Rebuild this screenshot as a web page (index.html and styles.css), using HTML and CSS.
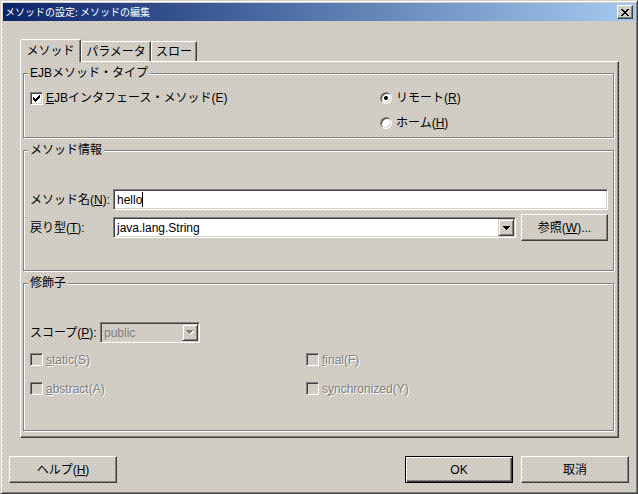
FILE: index.html
```html
<!DOCTYPE html>
<html lang="ja">
<head>
<meta charset="utf-8">
<title>メソッドの設定: メソッドの編集</title>
<link rel="stylesheet" href="styles.css">
</head>
<body>
<div class="window tex">
  <div class="titlebar">
    <span class="title">メソッドの設定: メソッドの編集</span>
    <span class="close tex"><svg width="8" height="7" viewBox="0 0 8 7" shape-rendering="crispEdges"><path fill="#000" d="M0 0h2v1h-2zM6 0h2v1h-2zM1 1h2v1h-2zM5 1h2v1h-2zM2 2h4v1h-4zM3 3h2v1h-2zM2 4h4v1h-4zM1 5h2v1h-2zM5 5h2v1h-2zM0 6h2v1h-2zM6 6h2v1h-2z"/></svg></span>
  </div>
  <div class="client">
    <div class="tabs">
      <div class="tab t1 active tex">メソッド</div>
      <div class="tab t2">パラメータ</div>
      <div class="tab t3">スロー</div>
    </div>
    <div class="panel">
      <div class="group g1">
        <div class="legend tex">EJBメソッド・タイプ</div>
        <div class="g1-body">
          <div class="g1-left">
            <div class="opt"><span class="cb"><svg width="7" height="7" viewBox="0 0 7 7" shape-rendering="crispEdges"><path fill="#000" d="M6 0h1v1h-1zM5 1h2v1h-2zM0 2h1v1h-1zM4 2h3v1h-3zM0 3h2v1h-2zM3 3h3v1h-3zM0 4h5v1h-5zM1 5h3v1h-3zM2 6h1v1h-1z"/></svg></span><span class="lbl"><u>E</u>JBインタフェース・メソッド(E)</span></div>
          </div>
          <div class="g1-right">
            <div class="opt"><span class="rb on"></span><span class="lbl">リモート(<u>R</u>)</span></div>
            <div class="opt"><span class="rb"></span><span class="lbl">ホーム(<u>H</u>)</span></div>
          </div>
        </div>
      </div>
      <div class="group g2">
        <div class="legend tex">メソッド情報</div>
        <div class="form-row r1">
          <span class="flabel">メソッド名(<u>N</u>):</span>
          <div class="field grow"><span>hello</span><span class="caret"></span></div>
        </div>
        <div class="form-row r2">
          <span class="flabel">戻り型(<u>T</u>):</span>
          <div class="field combo ctype"><span class="val">java.lang.String</span><span class="drop tex"><svg width="7" height="4" viewBox="0 0 7 4" shape-rendering="crispEdges"><path fill="#000" d="M0 0h7v1h-7zM1 1h5v1h-5zM2 2h3v1h-3zM3 3h1v1h-1z"/></svg></span></div>
          <button class="btn browse">参照(<u>W</u>)...</button>
        </div>
      </div>
      <div class="group g3">
        <div class="legend tex">修飾子</div>
        <div class="form-row scope">
          <span class="flabel short">スコープ(<u>P</u>):</span>
          <div class="field combo cscope disabled tex"><span class="val">public</span><span class="drop tex"><svg width="8" height="5" viewBox="0 0 8 5" shape-rendering="crispEdges"><path fill="#fff" d="M1 1h7v1h-7zM2 2h5v1h-5zM3 3h3v1h-3zM4 4h1v1h-1z"/><path fill="#808080" d="M0 0h7v1h-7zM1 1h5v1h-5zM2 2h3v1h-3zM3 3h1v1h-1z"/></svg></span></div>
        </div>
        <div class="checks">
          <div class="opt dis"><span class="cb tex"></span><span class="lbl"><u>s</u>tatic(S)</span></div>
          <div class="opt dis"><span class="cb tex"></span><span class="lbl"><u>f</u>inal(F)</span></div>
          <div class="opt dis"><span class="cb tex"></span><span class="lbl"><u>a</u>bstract(A)</span></div>
          <div class="opt dis"><span class="cb tex"></span><span class="lbl">s<u>y</u>nchronized(Y)</span></div>
        </div>
      </div>
    </div>
    <div class="buttons">
      <button class="btn">ヘルプ(<u>H</u>)</button>
      <button class="btn default">OK</button>
      <button class="btn">取消</button>
    </div>
  </div>
</div>
</body>
</html>
```

FILE: styles.css
```css
* { box-sizing: border-box; }
html, body { margin: 0; padding: 0; }
body {
  width: 638px;
  height: 494px;
  overflow: hidden;
  font-family: "Liberation Sans", "Noto Sans CJK JP", sans-serif;
  font-size: 12px;
  line-height: 14px;
  color: #000;
  background: #d4d0c8;
}
.tex {
  background-color: #d4d0c8;
  background-image:
    radial-gradient(circle at 1.5px 1.5px, #bab6ae 0.55px, rgba(186,182,174,0) 0.75px),
    radial-gradient(circle at 3.5px 3.5px, #bab6ae 0.55px, rgba(186,182,174,0) 0.75px);
  background-size: 4px 4px;
  background-attachment: fixed;
}
u { text-decoration-thickness: 1px; text-underline-offset: 1px; }

.window {
  width: 638px;
  height: 494px;
  border: 1px solid;
  border-color: #d4d0c8 #404040 #404040 #d4d0c8;
  box-shadow: inset 1px 1px #fff, inset -1px -1px #808080;
  padding: 2px;
  display: flex;
  flex-direction: column;
}

.titlebar {
  height: 18px;
  flex: none;
  display: flex;
  align-items: center;
  padding: 0 2px 0 2px;
  background: linear-gradient(90deg, #0a246a, #a6caf0);
  color: #fff;
}
.title {
  font-family: "Noto Sans CJK JP", sans-serif;
  font-size: 10px;
  line-height: 12px;
  white-space: nowrap;
}
.close {
  margin-left: auto;
  width: 16px;
  height: 14px;
  display: flex;
  align-items: center;
  justify-content: center;
  border: 1px solid;
  border-color: #fff #404040 #404040 #fff;
  box-shadow: inset -1px -1px #808080;
}

.client {
  flex: 1;
  display: flex;
  flex-direction: column;
  padding-top: 18px;
}

.tabs {
  display: flex;
  align-items: flex-end;
  height: 22px;
  margin-left: 17px;
  position: relative;
  z-index: 1;
}
.tab {
  height: 20px;
  border: 1px solid;
  border-bottom: 0;
  border-color: #fff #404040 #404040 #fff;
  box-shadow: inset -1px 0 #808080;
  border-radius: 2px 2px 0 0;
  display: flex;
  justify-content: center;
  padding-top: 3px;
  white-space: nowrap;
}
.tab.active {
  height: 23px;
  margin-bottom: -1px;
  padding-top: 4px;
}
.t1 { width: 61px; }
.t2 { width: 70px; }
.t3 { width: 46px; }

.panel {
  width: 599px;
  height: 377px;
  flex: none;
  margin-left: 17px;
  border: 1px solid;
  border-color: #fff #404040 #404040 #fff;
  box-shadow: inset -1px -1px #808080;
  padding: 11px 2px 0;
}

.group {
  width: 591px;
  border: 1px solid #808080;
  box-shadow: inset 1px 1px #fff, 1px 1px #fff;
  padding: 0 5px 0 6px;
}
.g1 { height: 65px; }
.g2 { height: 121px; margin-top: 12px; }
.g3 { height: 148px; margin-top: 12px; }

.legend {
  width: fit-content;
  height: 14px;
  margin: -8px 0 0 -2px;
  padding: 0 2px;
  white-space: nowrap;
}

.g1-body {
  display: flex;
  padding-top: 11px;
}
.g1-left { width: 350px; flex: none; }
.g1-right {
  display: flex;
  flex-direction: column;
  gap: 11px;
}

.opt {
  display: flex;
  align-items: center;
  height: 14px;
  white-space: nowrap;
}
.cb {
  width: 13px;
  height: 13px;
  flex: none;
  background-color: #fff;
  border: 1px solid;
  border-color: #808080 #fff #fff #808080;
  box-shadow: inset 1px 1px #404040, inset -1px -1px #d4d0c8;
  display: flex;
  align-items: center;
  justify-content: center;
  margin-right: 3px;
}
.opt.dis .cb { background-color: #d4d0c8; }
.opt.dis .lbl {
  color: #808080;
  text-shadow: 1px 1px #fff;
}
.rb {
  width: 12px;
  height: 12px;
  flex: none;
  border-radius: 50%;
  background: #fff;
  border: 1px solid;
  border-color: #808080 #fff #fff #808080;
  box-shadow: inset 1px 1px #404040, inset -1px -1px #d4d0c8;
  display: flex;
  align-items: center;
  justify-content: center;
  margin-right: 4px;
}
.rb.on::after {
  content: "";
  width: 4px;
  height: 4px;
  border-radius: 50%;
  background: #000;
}

.form-row {
  display: flex;
  align-items: center;
}
.r1 { margin-top: 32px; height: 21px; }
.r2 { margin-top: 4px; height: 27px; }
.scope { margin-top: 32px; height: 21px; }
.flabel { width: 83px; flex: none; white-space: nowrap; }
.flabel.short { width: 70px; }

.field {
  display: flex;
  align-items: center;
  height: 21px;
  background-color: #fff;
  border: 1px solid;
  border-color: #808080 #fff #fff #808080;
  box-shadow: inset 1px 1px #404040, inset -1px -1px #d4d0c8;
  padding: 0 1px 0 3px;
  white-space: nowrap;
  overflow: hidden;
}
.field.grow { flex: 1; }
.field.disabled { background-color: #d4d0c8; color: #808080; }
.ctype { width: 403px; flex: none; }
.cscope { width: 100px; flex: none; }
.caret {
  width: 1px;
  height: 15px;
  background: #000;
  margin-left: 0;
}
.drop {
  width: 16px;
  height: 17px;
  flex: none;
  margin-left: auto;
  display: flex;
  align-items: center;
  justify-content: center;
  border: 1px solid;
  border-color: #d4d0c8 #404040 #404040 #d4d0c8;
  box-shadow: inset 1px 1px #fff, inset -1px -1px #808080;
}

.checks {
  display: grid;
  grid-template-columns: 276px 1fr;
  row-gap: 16px;
  margin-top: 10px;
}
.checks .opt { height: 13px; }

.btn {
  width: 108px;
  height: 27px;
  flex: none;
  font: inherit;
  color: #000;
  background: transparent;
  border: 1px solid;
  border-color: #fff #404040 #404040 #fff;
  box-shadow: inset -1px -1px #808080;
  padding: 0;
  display: flex;
  align-items: center;
  justify-content: center;
  white-space: nowrap;
}
.btn.browse { width: 87px; margin-left: 5px; }
.btn.default {
  border-color: #000;
  box-shadow: inset 1px 1px #fff, inset -1px -1px #404040, inset -2px -2px #808080;
}

.buttons {
  display: flex;
  gap: 8px;
  margin-top: 18px;
  padding: 0 6px;
}
.buttons .default { margin-left: auto; }
```
